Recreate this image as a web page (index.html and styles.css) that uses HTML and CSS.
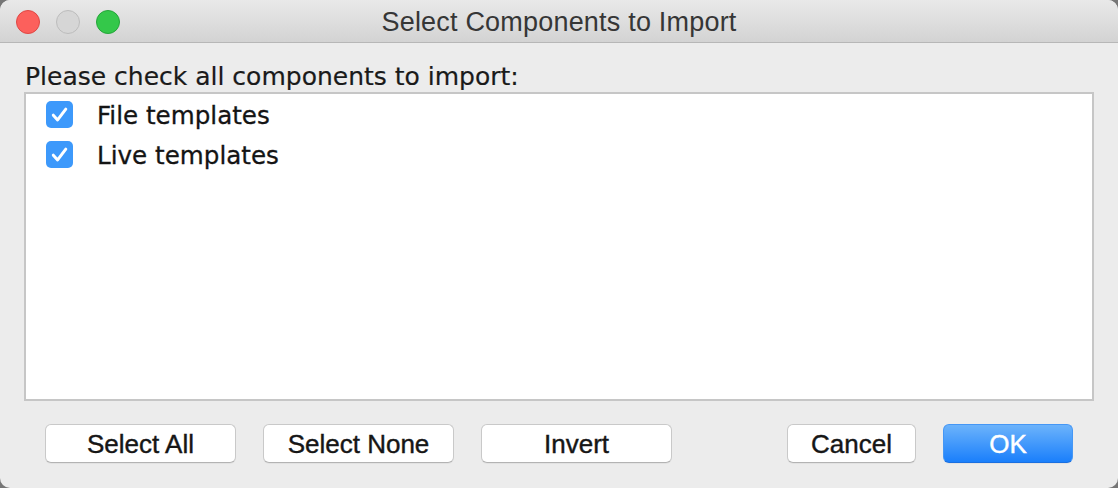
FILE: index.html
```html
<!DOCTYPE html>
<html>
<head>
<meta charset="utf-8">
<link rel="stylesheet" href="styles.css">
</head>
<body>
<div class="window">
  <div class="titlebar">
    <div class="lights">
      <span class="light red"></span>
      <span class="light gray"></span>
      <span class="light green"></span>
    </div>
    <div class="title">Select Components to Import</div>
    <div></div>
  </div>
  <div class="content">
    <div class="prompt">Please check all components to import:</div>
    <div class="list">
      <div class="row">
        <span class="check"><svg viewBox="0 0 27 27" width="27" height="27"><path d="M7.3 14.2 L11.6 18.9 L19.8 8.2" fill="none" stroke="#fff" stroke-width="3" stroke-linecap="round" stroke-linejoin="round"/></svg></span>
        <span class="item">File templates</span>
      </div>
      <div class="row">
        <span class="check"><svg viewBox="0 0 27 27" width="27" height="27"><path d="M7.3 14.2 L11.6 18.9 L19.8 8.2" fill="none" stroke="#fff" stroke-width="3" stroke-linecap="round" stroke-linejoin="round"/></svg></span>
        <span class="item">Live templates</span>
      </div>
    </div>
    <div class="buttons">
      <div class="group">
        <button class="btn wide">Select All</button>
        <button class="btn wide">Select None</button>
        <button class="btn wide">Invert</button>
      </div>
      <div class="group">
        <button class="btn narrow">Cancel</button>
        <button class="btn narrow primary">OK</button>
      </div>
    </div>
  </div>
</div>
</body>
</html>
```

FILE: styles.css
```css
html, body {
  margin: 0;
  padding: 0;
  background: #767676;
}
.window {
  width: 1118px;
  height: 488px;
  border-radius: 10px;
  overflow: hidden;
  background: #ececec;
  display: flex;
  flex-direction: column;
}
.titlebar {
  height: 42px;
  border-bottom: 1px solid #b7b7b7;
  background: linear-gradient(#e9e9e9, #d3d3d3);
  display: grid;
  grid-template-columns: 1fr auto 1fr;
  align-items: center;
}
.lights {
  display: flex;
  gap: 16px;
  padding-left: 16px;
  padding-top: 2px;
}
.light {
  width: 22px;
  height: 22px;
  border-radius: 50%;
  border: 1px solid;
}
.red { background: #fc605c; border-color: #df4744; }
.gray { background: #d6d6d6; border-color: #bcbcbc; }
.green { background: #34c84a; border-color: #25a53a; }
.title {
  font-family: "Liberation Sans", Arial, sans-serif;
  font-size: 27px;
  color: #363636;
  letter-spacing: 0.2px;
  padding-top: 2px;
}
.content {
  flex: 1;
  display: flex;
  flex-direction: column;
  padding: 19px 24px 25px 24px;
}
.prompt {
  font-family: "DejaVu Sans", sans-serif;
  font-size: 25px;
  line-height: 30px;
  color: #1a1a1a;
  padding-left: 1px;
  -webkit-text-stroke: 0.2px #1a1a1a;
}
.list {
  height: 305px;
  background: #fff;
  border: 2px solid #c6c6c6;
  display: flex;
  flex-direction: column;
}
.row {
  height: 40px;
  display: flex;
  align-items: center;
  padding-left: 20px;
}
.check {
  width: 27px;
  height: 27px;
  border-radius: 5px;
  background: #3d99fb;
  display: flex;
}
.item {
  font-family: "DejaVu Sans", sans-serif;
  font-size: 24.6px;
  color: #141414;
  margin-left: 24px;
  padding-top: 3px;
  -webkit-text-stroke: 0.3px #141414;
}
.buttons {
  margin-top: 23px;
  padding: 0 21px;
  display: flex;
  justify-content: space-between;
}
.group {
  display: flex;
  gap: 27px;
}
.btn {
  height: 39px;
  padding: 1px 0 0 0;
  background: #fff;
  border: 1px solid #c9c9c9;
  border-bottom-color: #b3b3b3;
  border-radius: 6px;
  font-family: "Liberation Sans", Arial, sans-serif;
  font-size: 26px;
  color: #161616;
  -webkit-text-stroke: 0.4px #161616;
  box-shadow: 0 1px 0 rgba(0,0,0,0.04);
}
.wide { width: 191px; }
.narrow { width: 129px; }
.primary {
  width: 130px;
  background: linear-gradient(#6cb3fb, #1a7ffb);
  border-color: #4597f5;
  border-bottom-color: #1a6fe0;
  color: #fff;
  -webkit-text-stroke: 0.4px #fff;
}
```
